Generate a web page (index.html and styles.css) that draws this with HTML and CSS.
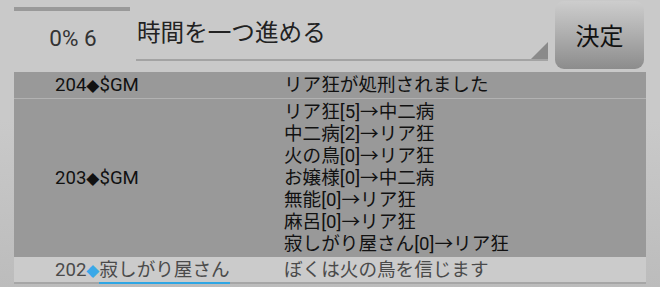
FILE: index.html
```html
<!DOCTYPE html>
<html>
<head lang="ja">
    <meta charset="UTF-8">
    <title></title>
    <link rel="stylesheet" href="styles.css">
</head>
<body>
<div id="header">
    <div class="progress">
        <div class="bar"></div>
        <div class="count">0% 6</div>
    </div>
    <div class="select">
        <span>時間を一つ進める</span>
        <i class="arrow"></i>
    </div>
    <a href="#" class="btn">決定</a>
</div>
<table id="log">
    <tr class="sys">
        <td class="who">204<span class="dia">◆</span>$GM</td>
        <td class="msg">リア狂が処刑されました</td>
    </tr>
    <tr class="sys">
        <td class="who">203<span class="dia">◆</span>$GM</td>
        <td class="msg">リア狂[5]→中二病<br>中二病[2]→リア狂<br>火の鳥[0]→リア狂<br>お嬢様[0]→中二病<br>無能[0]→リア狂<br>麻呂[0]→リア狂<br>寂しがり屋さん[0]→リア狂</td>
    </tr>
    <tr class="talk">
        <td class="who">202<span class="dia blue">◆</span><span class="name">寂しがり屋さん</span></td>
        <td class="msg">ぼくは火の鳥を信じます</td>
    </tr>
</table>
</body>
</html>
```

FILE: styles.css
```css
body, div, table, td {
    margin: 0;
    padding: 0;
}

html, body {
    height: 100%;
}

body {
    font-family: Roboto, "Noto Sans CJK JP", sans-serif;
    background: linear-gradient(#c9c9c9, #c9c9c9 120px, #bcbcbc);
    color: #111;
    overflow: hidden;
}

a {
    text-decoration: none;
}

#header {
    display: flex;
    align-items: flex-start;
    height: 72px;
    padding-left: 14px;
}

.progress {
    width: 116px;
    padding-top: 7px;
}

.progress .bar {
    height: 4px;
    background: #999;
}

.progress .count {
    text-align: center;
    font-size: 22.5px;
    line-height: 28px;
    margin-top: 13px;
    padding-left: 2px;
    color: #333;
}

.select {
    position: relative;
    width: 412px;
    height: 61px;
    margin-left: 6px;
    border-bottom: 2px solid #a3a3a3;
    box-sizing: border-box;
    font-size: 23.6px;
    line-height: 30px;
    color: #222;
}

.select span {
    display: block;
    padding: 18px 0 0 1px;
}

.select .arrow {
    position: absolute;
    right: 0;
    bottom: 0;
    width: 0;
    height: 0;
    border-left: 17px solid transparent;
    border-bottom: 17px solid #8a8a8a;
}

.btn {
    width: 89px;
    height: 68px;
    margin: 1px 0 0 7px;
    border-radius: 9px;
    background: linear-gradient(#cdcdcd, #b4b4b4 40%, #8c8c8c);
    color: #111;
    font-size: 24px;
    display: flex;
    align-items: center;
    justify-content: center;
    padding-bottom: 2px;
    box-sizing: border-box;
}

#log {
    width: 632px;
    margin-left: 14px;
    border-collapse: collapse;
    font-size: 18.6px;
    line-height: 22px;
}

#log td {
    vertical-align: middle;
}

#log .who {
    width: 229px;
    padding-left: 41px;
}

#log .sys {
    background: #999;
}

#log .sys + .sys {
    border-top: 1px solid #b2b2b2;
}

#log .sys:first-child td {
    height: 26px;
    padding-top: 0;
    padding-bottom: 0;
}

#log .sys td {
    padding-top: 2px;
    padding-bottom: 2px;
}

#log .talk {
    background: #cbcbcb;
    color: #4a4a4a;
    border-bottom: 2px solid #a6a6a6;
}

#log .talk td {
    height: 25px;
    padding: 0;
}

#log .talk .who {
    padding-left: 41px;
}

.dia {
    font-family: "DejaVu Sans", sans-serif;
    font-size: 17px;
}

.dia.blue {
    color: #3aa8e8;
}

.name {
    border-bottom: 2px solid #2ea6e4;
    padding-bottom: 1px;
}
```
